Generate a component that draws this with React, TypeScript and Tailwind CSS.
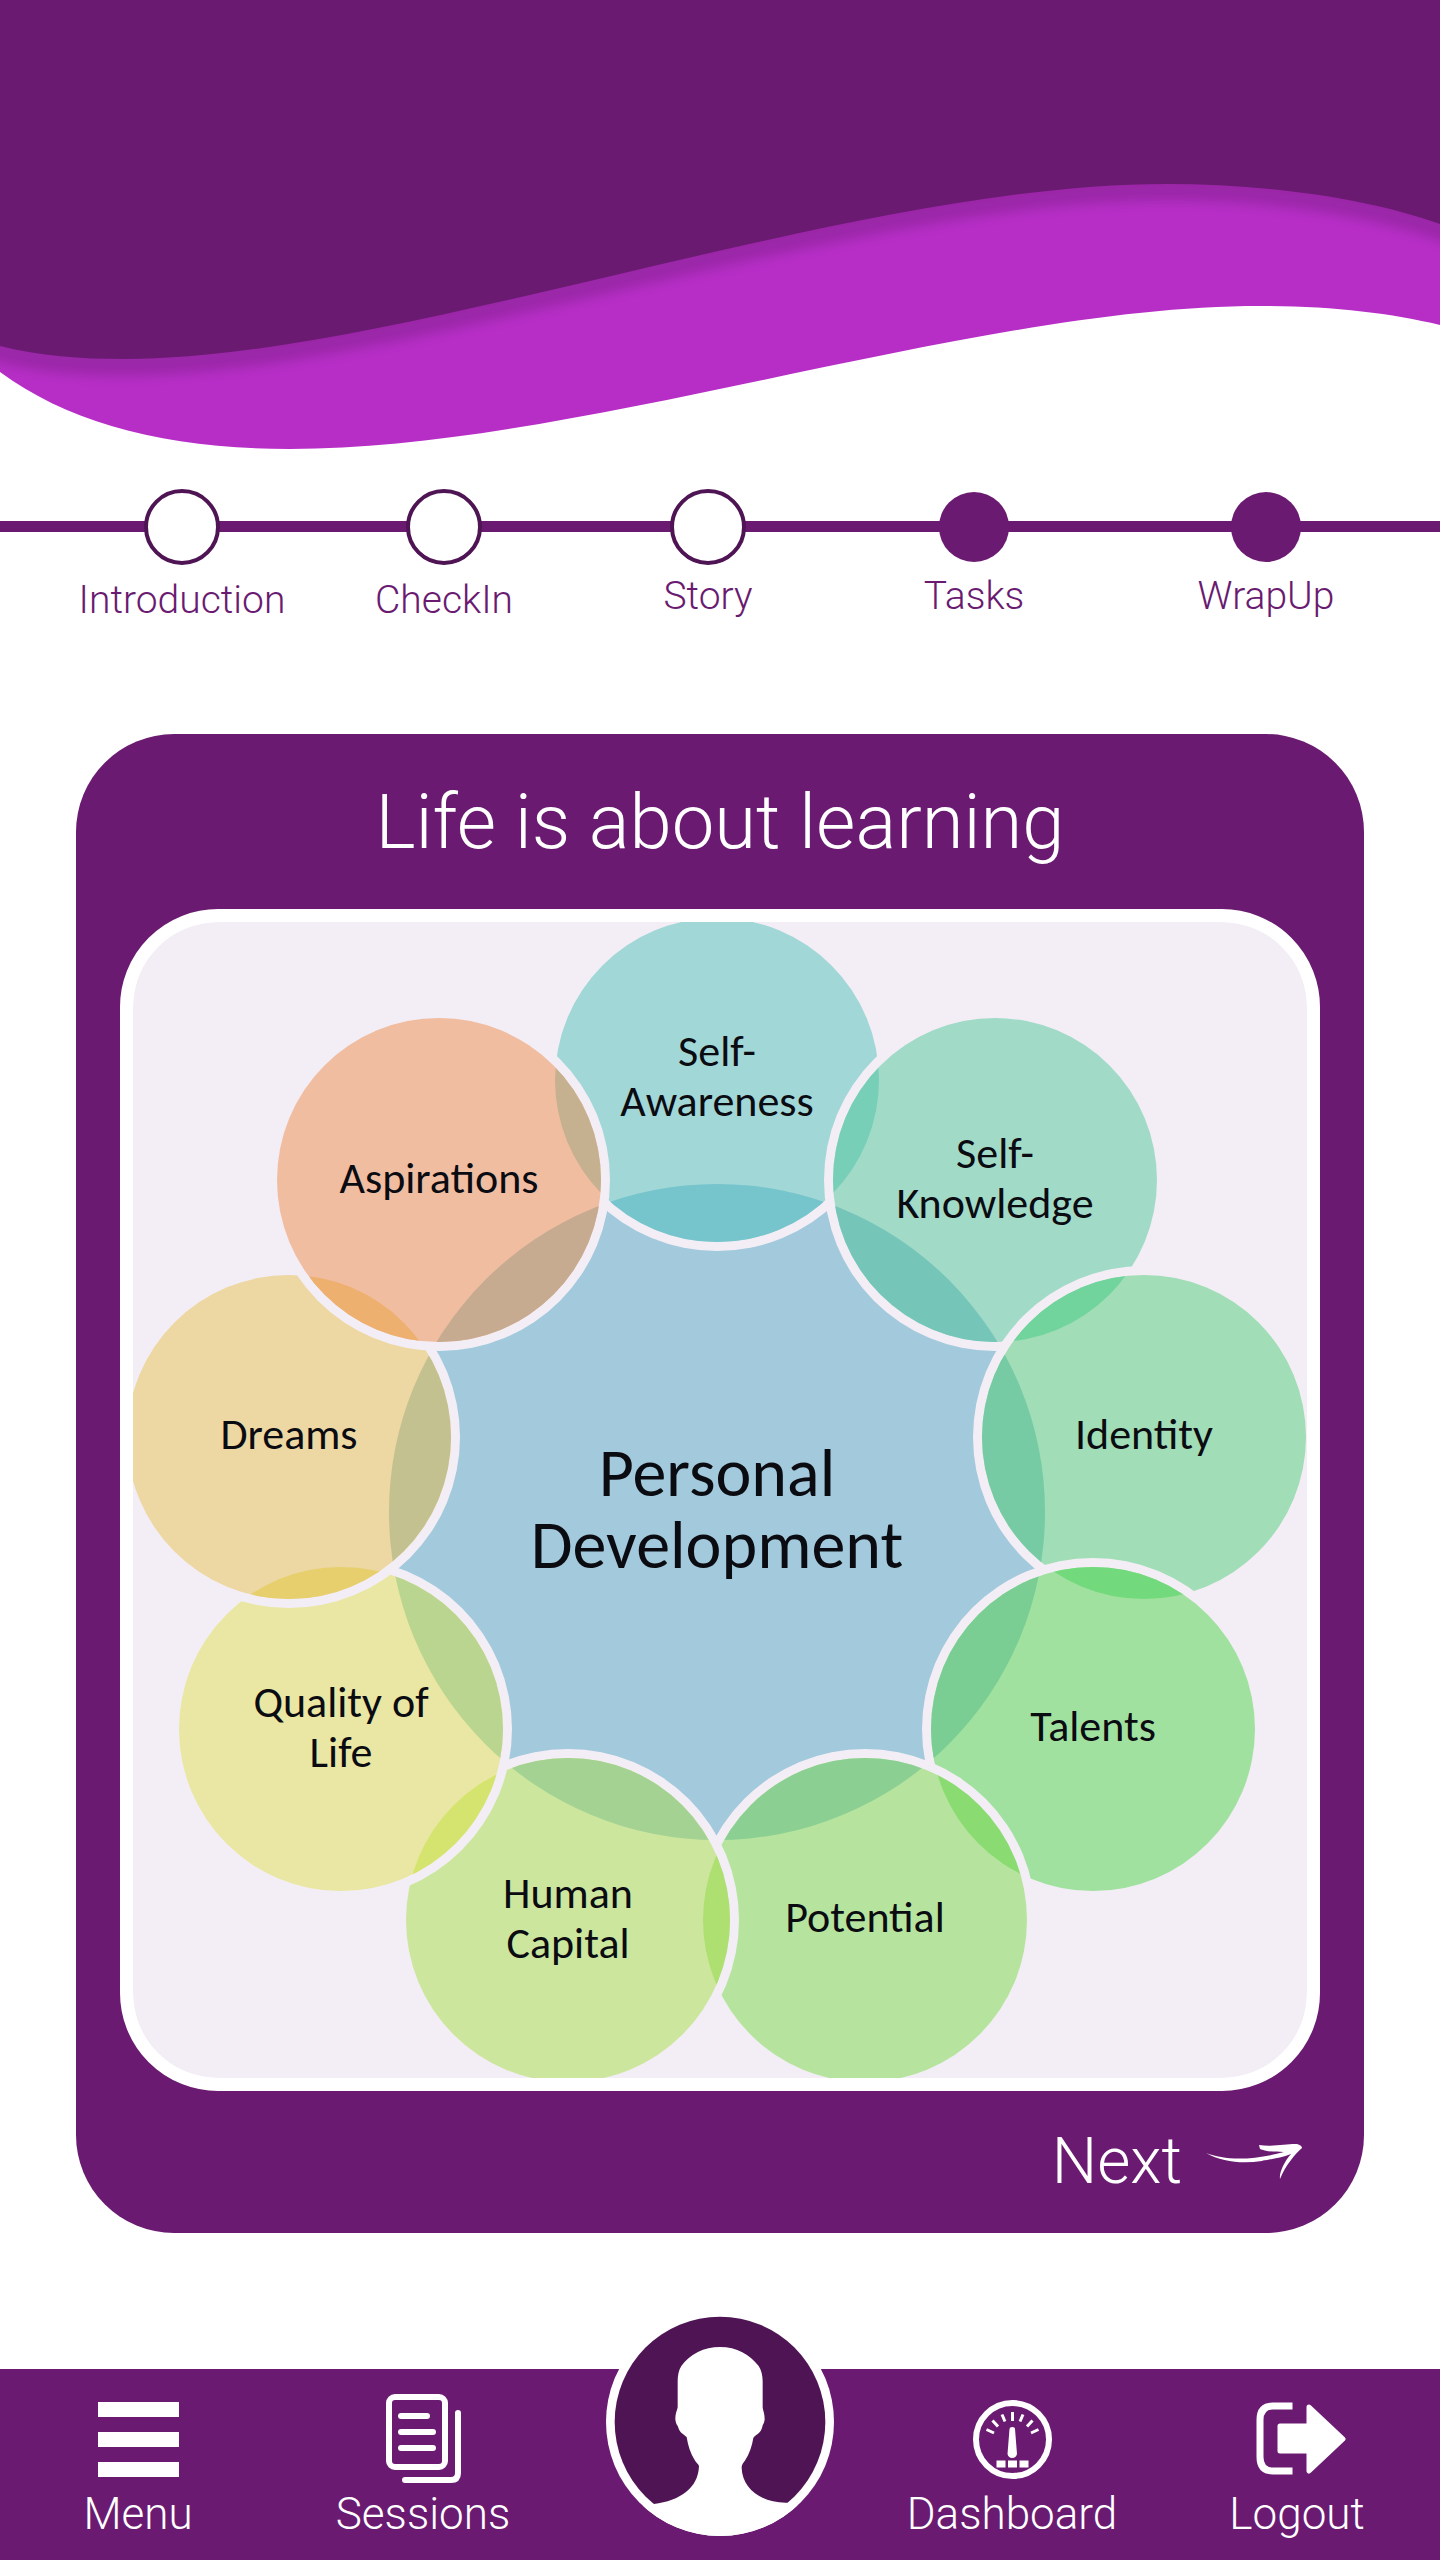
import React from "react";

type Step = { label: string; done: boolean; gap: string };

const steps: Step[] = [
  { label: "Introduction", done: false, gap: "mt-3" },
  { label: "CheckIn", done: false, gap: "mt-3" },
  { label: "Story", done: false, gap: "mt-2" },
  { label: "Tasks", done: true, gap: "mt-2" },
  { label: "WrapUp", done: true, gap: "mt-2" },
];

type Overlap = { with: string; fill: string };
type Bubble = {
  id: string;
  cx: number;
  cy: number;
  r: number;
  fill: string;
  lines: string[];
  baseline: number;
  overlaps: Overlap[];
};

const core: Bubble = {
  id: "core",
  cx: 584,
  cy: 590,
  r: 328,
  fill: "#a2c9dc",
  lines: ["Personal", "Development"],
  baseline: 574,
  overlaps: [],
};

// Listed in painting order: each bubble lies over the ones before it.
const bubbles: Bubble[] = [
  { id: "awareness", cx: 584, cy: 158, r: 162, fill: "#a2d7d7", lines: ["Self-", "Awareness"], baseline: 144, overlaps: [{ with: "core", fill: "#76c4cc" }] },
  { id: "knowledge", cx: 862, cy: 258, r: 162, fill: "#a2dac8", lines: ["Self-", "Knowledge"], baseline: 246, overlaps: [{ with: "core", fill: "#75c5b9" }, { with: "awareness", fill: "#77cfb8" }] },
  { id: "identity", cx: 1011, cy: 515, r: 162, fill: "#a1ddb6", lines: ["Identity"], baseline: 527, overlaps: [{ with: "core", fill: "#76cba5" }, { with: "knowledge", fill: "#70d49c" }] },
  { id: "talents", cx: 960, cy: 807, r: 162, fill: "#a1e1a0", lines: ["Talents"], baseline: 819, overlaps: [{ with: "core", fill: "#7ace94" }, { with: "identity", fill: "#72da7c" }] },
  { id: "potential", cx: 732, cy: 998, r: 162, fill: "#b6e49e", lines: ["Potential"], baseline: 1010, overlaps: [{ with: "core", fill: "#8ccf93" }, { with: "talents", fill: "#8adc72" }] },
  { id: "capital", cx: 435, cy: 998, r: 162, fill: "#cce69e", lines: ["Human", "Capital"], baseline: 986, overlaps: [{ with: "core", fill: "#a3d293" }, { with: "potential", fill: "#ade070" }] },
  { id: "quality", cx: 208, cy: 807, r: 162, fill: "#e9e7a3", lines: ["Quality of", "Life"], baseline: 795, overlaps: [{ with: "core", fill: "#bad590" }, { with: "capital", fill: "#d4e46e" }] },
  { id: "dreams", cx: 156, cy: 515, r: 162, fill: "#edd7a2", lines: ["Dreams"], baseline: 527, overlaps: [{ with: "core", fill: "#c3c18f" }, { with: "quality", fill: "#e7cf6d" }] },
  { id: "aspirations", cx: 306, cy: 258, r: 162, fill: "#f0bda1", lines: ["Aspirations"], baseline: 271, overlaps: [{ with: "core", fill: "#c6ab90" }, { with: "awareness", fill: "#c5b18f" }, { with: "dreams", fill: "#edb06f" }] },
];

const byId: Record<string, Bubble> = Object.fromEntries([core, ...bubbles].map((b) => [b.id, b]));

function Waves() {
  return (
    <svg viewBox="0 0 1440 450" className="block h-auto w-full" aria-hidden="true">
      <defs>
        <clipPath id="light-wave">
          <path d="M0 0V372C70 424 170 449 290 449C580 449 970 306 1260 306C1330 306 1390 313 1440 325V0Z" />
        </clipPath>
        <filter id="soft" x="-5%" y="-5%" width="110%" height="115%">
          <feGaussianBlur stdDeviation="6" />
        </filter>
      </defs>
      <path d="M0 0V372C70 424 170 449 290 449C580 449 970 306 1260 306C1330 306 1390 313 1440 325V0Z" fill="#b72ec7" />
      <g clipPath="url(#light-wave)">
        <path
          d="M-40 0V350L0 363C40 373 80 376 125 376C400 376 850 201 1166 201C1270 201 1370 216 1440 241L1480 256V0Z"
          fill="#000"
          opacity="0.15"
          filter="url(#soft)"
        />
      </g>
      <path d="M0 0V346C40 356 80 359 125 359C400 359 850 184 1166 184C1270 184 1370 199 1440 224V0Z" fill="#6a1b71" />
    </svg>
  );
}

function Diagram() {
  return (
    <svg
      viewBox="0 0 1174 1156"
      className="block h-auto w-full bg-[#f3eef5] font-[Carlito,Lato,sans-serif]"
      role="img"
      aria-label="Personal development and its nine parts"
    >
      <defs>
        {bubbles.map((b) => (
          <clipPath id={"clip-" + b.id} key={b.id}>
            <circle cx={b.cx} cy={b.cy} r={b.r} />
          </clipPath>
        ))}
      </defs>
      <circle cx={core.cx} cy={core.cy} r={core.r} fill={core.fill} />
      {bubbles.map((b) => (
        <g key={b.id}>
          <circle cx={b.cx} cy={b.cy} r={b.r + 9} fill="#f3eef5" />
          <circle cx={b.cx} cy={b.cy} r={b.r} fill={b.fill} />
          <g clipPath={"url(#clip-" + b.id + ")"}>
            {b.overlaps.map((o) => (
              <circle key={o.with} cx={byId[o.with].cx} cy={byId[o.with].cy} r={byId[o.with].r} fill={o.fill} />
            ))}
          </g>
        </g>
      ))}
      {bubbles.map((b) => (
        <text key={b.id} textAnchor="middle" className="fill-[#0b0b12] text-[44px]">
          {b.lines.map((line, i) => (
            <tspan key={line} x={b.cx} y={b.baseline + i * 50}>
              {line}
            </tspan>
          ))}
        </text>
      ))}
      <text textAnchor="middle" className="fill-[#0b0b12] text-[68px]">
        {core.lines.map((line, i) => (
          <tspan key={line} x={core.cx} y={core.baseline + i * 72}>
            {line}
          </tspan>
        ))}
      </text>
    </svg>
  );
}

function ArrowIcon() {
  return (
    <svg width="96" height="36" viewBox="0 0 96 36" fill="#fff" aria-hidden="true">
      <path d="M0 9C18 16 45 17 78 8C66 8 58 7 54 5L53 1C66 3 80 0 89 0C93 0 96 2 96 4C89 10 79 22 74 35C73 29 78 18 85 10C72 15 58 16 56 17C36 20 16 18 0 9Z" />
    </svg>
  );
}

function MenuIcon() {
  return (
    <svg width="81" height="75" viewBox="0 0 81 75" fill="#fff" aria-hidden="true">
      <path d="M0 0h81v15H0zM0 30h81v15H0zM0 60h81v15H0z" />
    </svg>
  );
}

function SessionsIcon() {
  return (
    <svg width="75" height="90" viewBox="0 0 75 90" fill="none" stroke="#fff" strokeWidth="6" strokeLinecap="round" aria-hidden="true">
      <rect x="3" y="3" width="56" height="70" rx="6" />
      <path d="M15 22H41M15 38H47M15 54H47M72 19V79Q72 86 65 86H19" />
    </svg>
  );
}

function DashboardIcon() {
  return (
    <svg width="79" height="79" viewBox="0 0 79 79" fill="none" stroke="#fff" strokeWidth="3" aria-hidden="true">
      <circle cx="39.5" cy="39.5" r="36.5" strokeWidth="6" />
      <path d="M39.5 12V21M29 14.5L32 21.5M50 14.5L47 21.5M19.5 20.5L25 26.5M59.5 20.5L54 26.5M13.5 29.5L21 33M65.5 29.5L58 33" />
      <path d="M36.5 29Q36.5 27 39.2 27Q42 27 42 29L44 54Q43 58 39.2 58Q35.5 58 34.5 54Z" fill="#fff" stroke="none" />
      <path d="M23.5 60.5h9v7h-9zM35 60.5h9v7h-9zM46.5 60.5h9v7h-9z" fill="#fff" stroke="none" />
    </svg>
  );
}

function LogoutIcon() {
  return (
    <svg width="98" height="74" viewBox="-8 0 98 74" fill="none" stroke="#fff" aria-hidden="true">
      <path d="M33 4H17Q4 4 4 18V55Q4 69 17 69H33" strokeWidth="7" strokeLinecap="square" strokeLinejoin="round" />
      <path d="M24 24H53V5L87 37L53 69V49H24Z" fill="#fff" strokeWidth="5" strokeLinejoin="round" />
    </svg>
  );
}

function Avatar() {
  return (
    <svg width="228" height="228" viewBox="78 20 684 684" aria-hidden="true">
      <defs>
        <clipPath id="disc">
          <circle cx="420" cy="362" r="342" />
        </clipPath>
      </defs>
      <circle cx="420" cy="362" r="342" fill="#fff" />
      <circle cx="420" cy="362" r="316" fill="#4f1454" />
      <path
        clipPath="url(#disc)"
        fill="#fff"
        d="M222 608C300 598 355 560 357 494C355 488 348 484 344 476C332 458 324 434 320 408C316 400 300 398 294 376C291 369 288 370 286 354C286 336 291 328 293 318V240C293 222 296 206 304 194C330 158 372 137 420 137C470 137 510 160 536 194C544 206 548 222 548 240V318C549 328 554 336 554 354C552 370 549 366 547 376C542 398 524 400 520 410C516 434 508 458 496 476C491 484 485 488 485 500C487 562 545 606 622 604L680 620V704H160V620Z"
      />
    </svg>
  );
}

function NavItem({ label, children }: { label: string; children: React.ReactNode }) {
  return (
    <button type="button" className="flex flex-col items-center justify-end gap-2 pb-6">
      <span className="flex h-[90px] items-center">{children}</span>
      <span className="text-[44px] leading-[44px]">{label}</span>
    </button>
  );
}

export default function App() {
  return (
    <div className="flex min-h-screen flex-col bg-white font-[Roboto,sans-serif] font-light">
      <header>
        <Waves />
      </header>

      <nav aria-label="Progress" className="relative mt-[39px]">
        <div className="absolute inset-x-0 top-8 h-[11px] bg-[#6a1b71]" />
        <ol className="relative grid grid-cols-[264fr_260fr_268fr_264fr_320fr] pr-3.5 pl-[50px]">
          {steps.map((s) => (
            <li key={s.label} className="flex justify-center">
              <button type="button" className="flex flex-col items-center text-[#6a1b71]">
                <span className="flex size-[76px] items-center justify-center">
                  {s.done ? (
                    <span className="size-[70px] rounded-full bg-[#6a1b71]" />
                  ) : (
                    <span className="size-[76px] rounded-full border-4 border-[#4f1454] bg-white" />
                  )}
                </span>
                <span className={s.gap + " text-[39px] leading-[46px]"}>{s.label}</span>
              </button>
            </li>
          ))}
        </ol>
      </nav>

      <main className="mx-19 mt-[111px] rounded-[98px] bg-[#6a1b71] text-white">
        <h1 className="flex h-[175px] items-center justify-center text-[76px] leading-none">Life is about learning</h1>
        <div className="mx-11 overflow-hidden rounded-[98px] border-[13px] border-white bg-white">
          <div className="overflow-hidden rounded-[85px]">
            <Diagram />
          </div>
        </div>
        <div className="flex h-[142px] items-center justify-end pr-[62px]">
          <button type="button" className="flex items-center gap-6 text-[64px] leading-none">
            Next
            <ArrowIcon />
          </button>
        </div>
      </main>

      <footer className="mt-auto">
        <nav
          aria-label="Main"
          className="grid h-[191px] grid-cols-[276fr_294fr_300fr_284fr_286fr] bg-[#6a1b71] text-white"
        >
          <NavItem label="Menu">
            <MenuIcon />
          </NavItem>
          <NavItem label="Sessions">
            <SessionsIcon />
          </NavItem>
          <button type="button" aria-label="Profile" className="-mt-[61px] flex items-end justify-center self-end pb-6">
            <Avatar />
          </button>
          <NavItem label="Dashboard">
            <DashboardIcon />
          </NavItem>
          <NavItem label="Logout">
            <LogoutIcon />
          </NavItem>
        </nav>
      </footer>
    </div>
  );
}
